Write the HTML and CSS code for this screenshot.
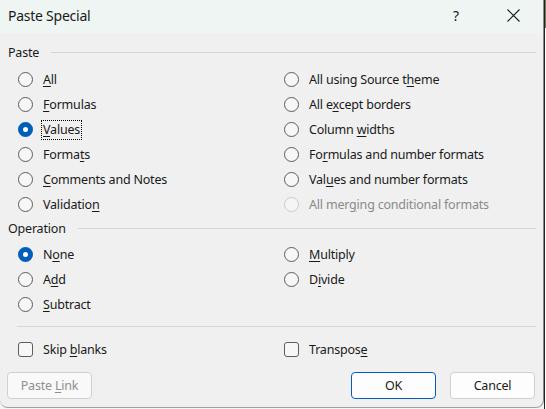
FILE: index.html
```html
<!DOCTYPE html>
<html>
<head>
<meta charset="utf-8">
<link rel="stylesheet" href="styles.css">
</head>
<body>
<div class="screen">
  <div class="dialog">
    <div class="titlebar">
      <span class="title">Paste Special</span>
      <span class="help">?</span>
      <span class="close">
        <svg width="13" height="13" viewBox="0 0 13 13"><path d="M0.5 0.5 L12.5 12.5 M12.5 0.5 L0.5 12.5" stroke="#1a1a1a" stroke-width="1.1" fill="none"/></svg>
      </span>
    </div>
    <div class="body">
      <div class="group-head"><span class="group-label">Paste</span><span class="rule"></span></div>
      <div class="grid paste-grid">
        <div class="opt"><span class="radio"></span><span class="lbl"><u>A</u>ll</span></div>
        <div class="opt"><span class="radio"></span><span class="lbl">All using Source t<u>h</u>eme</span></div>
        <div class="opt"><span class="radio"></span><span class="lbl"><u>F</u>ormulas</span></div>
        <div class="opt"><span class="radio"></span><span class="lbl">All e<u>x</u>cept borders</span></div>
        <div class="opt"><span class="radio on"></span><span class="lbl focus"><u>V</u>alues</span></div>
        <div class="opt"><span class="radio"></span><span class="lbl">Column <u>w</u>idths</span></div>
        <div class="opt"><span class="radio"></span><span class="lbl">Forma<u>t</u>s</span></div>
        <div class="opt"><span class="radio"></span><span class="lbl">Fo<u>r</u>mulas and number formats</span></div>
        <div class="opt"><span class="radio"></span><span class="lbl"><u>C</u>omments and Notes</span></div>
        <div class="opt"><span class="radio"></span><span class="lbl">Val<u>u</u>es and number formats</span></div>
        <div class="opt"><span class="radio"></span><span class="lbl">Validatio<u>n</u></span></div>
        <div class="opt disabled"><span class="radio"></span><span class="lbl">All mer<u>g</u>ing conditional formats</span></div>
      </div>
      <div class="group-head op-head"><span class="group-label">Operation</span><span class="rule"></span></div>
      <div class="grid op-grid">
        <div class="opt"><span class="radio on"></span><span class="lbl">N<u>o</u>ne</span></div>
        <div class="opt"><span class="radio"></span><span class="lbl"><u>M</u>ultiply</span></div>
        <div class="opt"><span class="radio"></span><span class="lbl">A<u>d</u>d</span></div>
        <div class="opt"><span class="radio"></span><span class="lbl">D<u>i</u>vide</span></div>
        <div class="opt"><span class="radio"></span><span class="lbl"><u>S</u>ubtract</span></div>
      </div>
      <div class="sep"></div>
      <div class="grid check-grid">
        <div class="opt"><span class="check"></span><span class="lbl">Skip <u>b</u>lanks</span></div>
        <div class="opt"><span class="check"></span><span class="lbl">Transpos<u>e</u></span></div>
      </div>
      <div class="buttons">
        <span class="btn disabled"><span>Paste <u>L</u>ink</span></span>
        <span class="spacer"></span>
        <span class="btn default"><span>OK</span></span>
        <span class="btn"><span>Cancel</span></span>
      </div>
    </div>
  </div>
  <div class="edge"></div>
</div>
</body>
</html>
```

FILE: styles.css
```css
html, body {
  margin: 0;
  padding: 0;
}
body {
  width: 546px;
  height: 409px;
  overflow: hidden;
  background: #f4f4f4;
  font-family: "Noto Sans", "Open Sans", sans-serif;
  color: #1a1a1a;
}
.screen {
  display: flex;
  width: 546px;
  height: 409px;
}
.dialog {
  width: 544px;
  height: 408px;
  background: #f0f0f0;
  border-right: 1px solid #8a8a8a;
  border-bottom: 1px solid #a0a0a0;
  border-radius: 0 0 8px 8px;
  box-sizing: border-box;
  overflow: hidden;
  flex: none;
}
.edge {
  flex: 1;
  background: linear-gradient(to bottom, #6b7a52 0, #6b7a52 28px, #ffffff 28px);
  border-left: 1px solid #222;
}
.titlebar {
  height: 33px;
  box-sizing: border-box;
  padding-bottom: 3px;
  background: #eef5f3;
  display: flex;
  align-items: center;
  padding-left: 8px;
}
.title {
  font-size: 14px;
  letter-spacing: -0.25px;
  flex: 1;
}
.help {
  font-size: 14px;
  width: 12px;
  margin-right: 45px;
  text-align: center;
}
.close {
  width: 13px;
  height: 13px;
  margin-right: 23px;
  display: flex;
}
.body {
  font-size: 12.5px;
  letter-spacing: -0.2px;
  padding: 9px 7px 0 8px;
}
.group-head {
  display: flex;
  align-items: center;
  height: 20px;
}
.group-label {
  margin-right: 12px;
}
.rule {
  flex: 1;
  height: 1px;
  background: #d6d6d6;
}
.grid {
  display: grid;
  grid-template-columns: 266px 1fr;
  padding-left: 10px;
}
.paste-grid {
  margin-top: 5px;
}
.op-head {
  margin-top: 1px;
}
.op-grid {
  margin-top: 4px;
  height: 75px;
}
.opt {
  height: 25px;
  display: flex;
  align-items: center;
}
.radio {
  width: 15px;
  height: 15px;
  box-sizing: border-box;
  border: 1px solid #5d5d5d;
  border-radius: 50%;
  background: #f7f7f7;
  margin-right: 9px;
  flex: none;
}
.radio.on {
  border: 5px solid #005fb8;
  background: #ffffff;
}
.disabled .radio {
  border-color: #cbcbcb;
  background: #f5f5f5;
}
.disabled .lbl {
  color: #8a8a8a;
}
.lbl {
  line-height: 18px;
  padding: 0 1px;
  margin-left: -1px;
  border: 1px dotted transparent;
}
.lbl.focus {
  border-color: #000;
}
u {
  text-decoration: underline;
  text-underline-offset: 2px;
}
.sep {
  height: 1px;
  background: #d6d6d6;
  margin: 9px 0 0 9px;
}
.check-grid {
  margin-top: 10px;
}
.check {
  width: 15px;
  height: 15px;
  box-sizing: border-box;
  border: 1px solid #5d5d5d;
  border-radius: 3px;
  background: #f7f7f7;
  margin-right: 9px;
  flex: none;
}
.buttons {
  display: flex;
  margin-top: 10px;
  gap: 14px;
  padding-right: 1px;
  margin-left: -1px;
}
.spacer {
  flex: 1;
}
.btn {
  width: 85px;
  height: 27px;
  box-sizing: border-box;
  border: 1px solid #d0d0d0;
  border-radius: 4px;
  background: #fdfdfd;
  display: flex;
  align-items: center;
  justify-content: center;
}
.btn.default {
  border-color: #005fb8;
}
.btn.disabled {
  color: #8f8f8f;
  background: #f9f9f9;
}
```
